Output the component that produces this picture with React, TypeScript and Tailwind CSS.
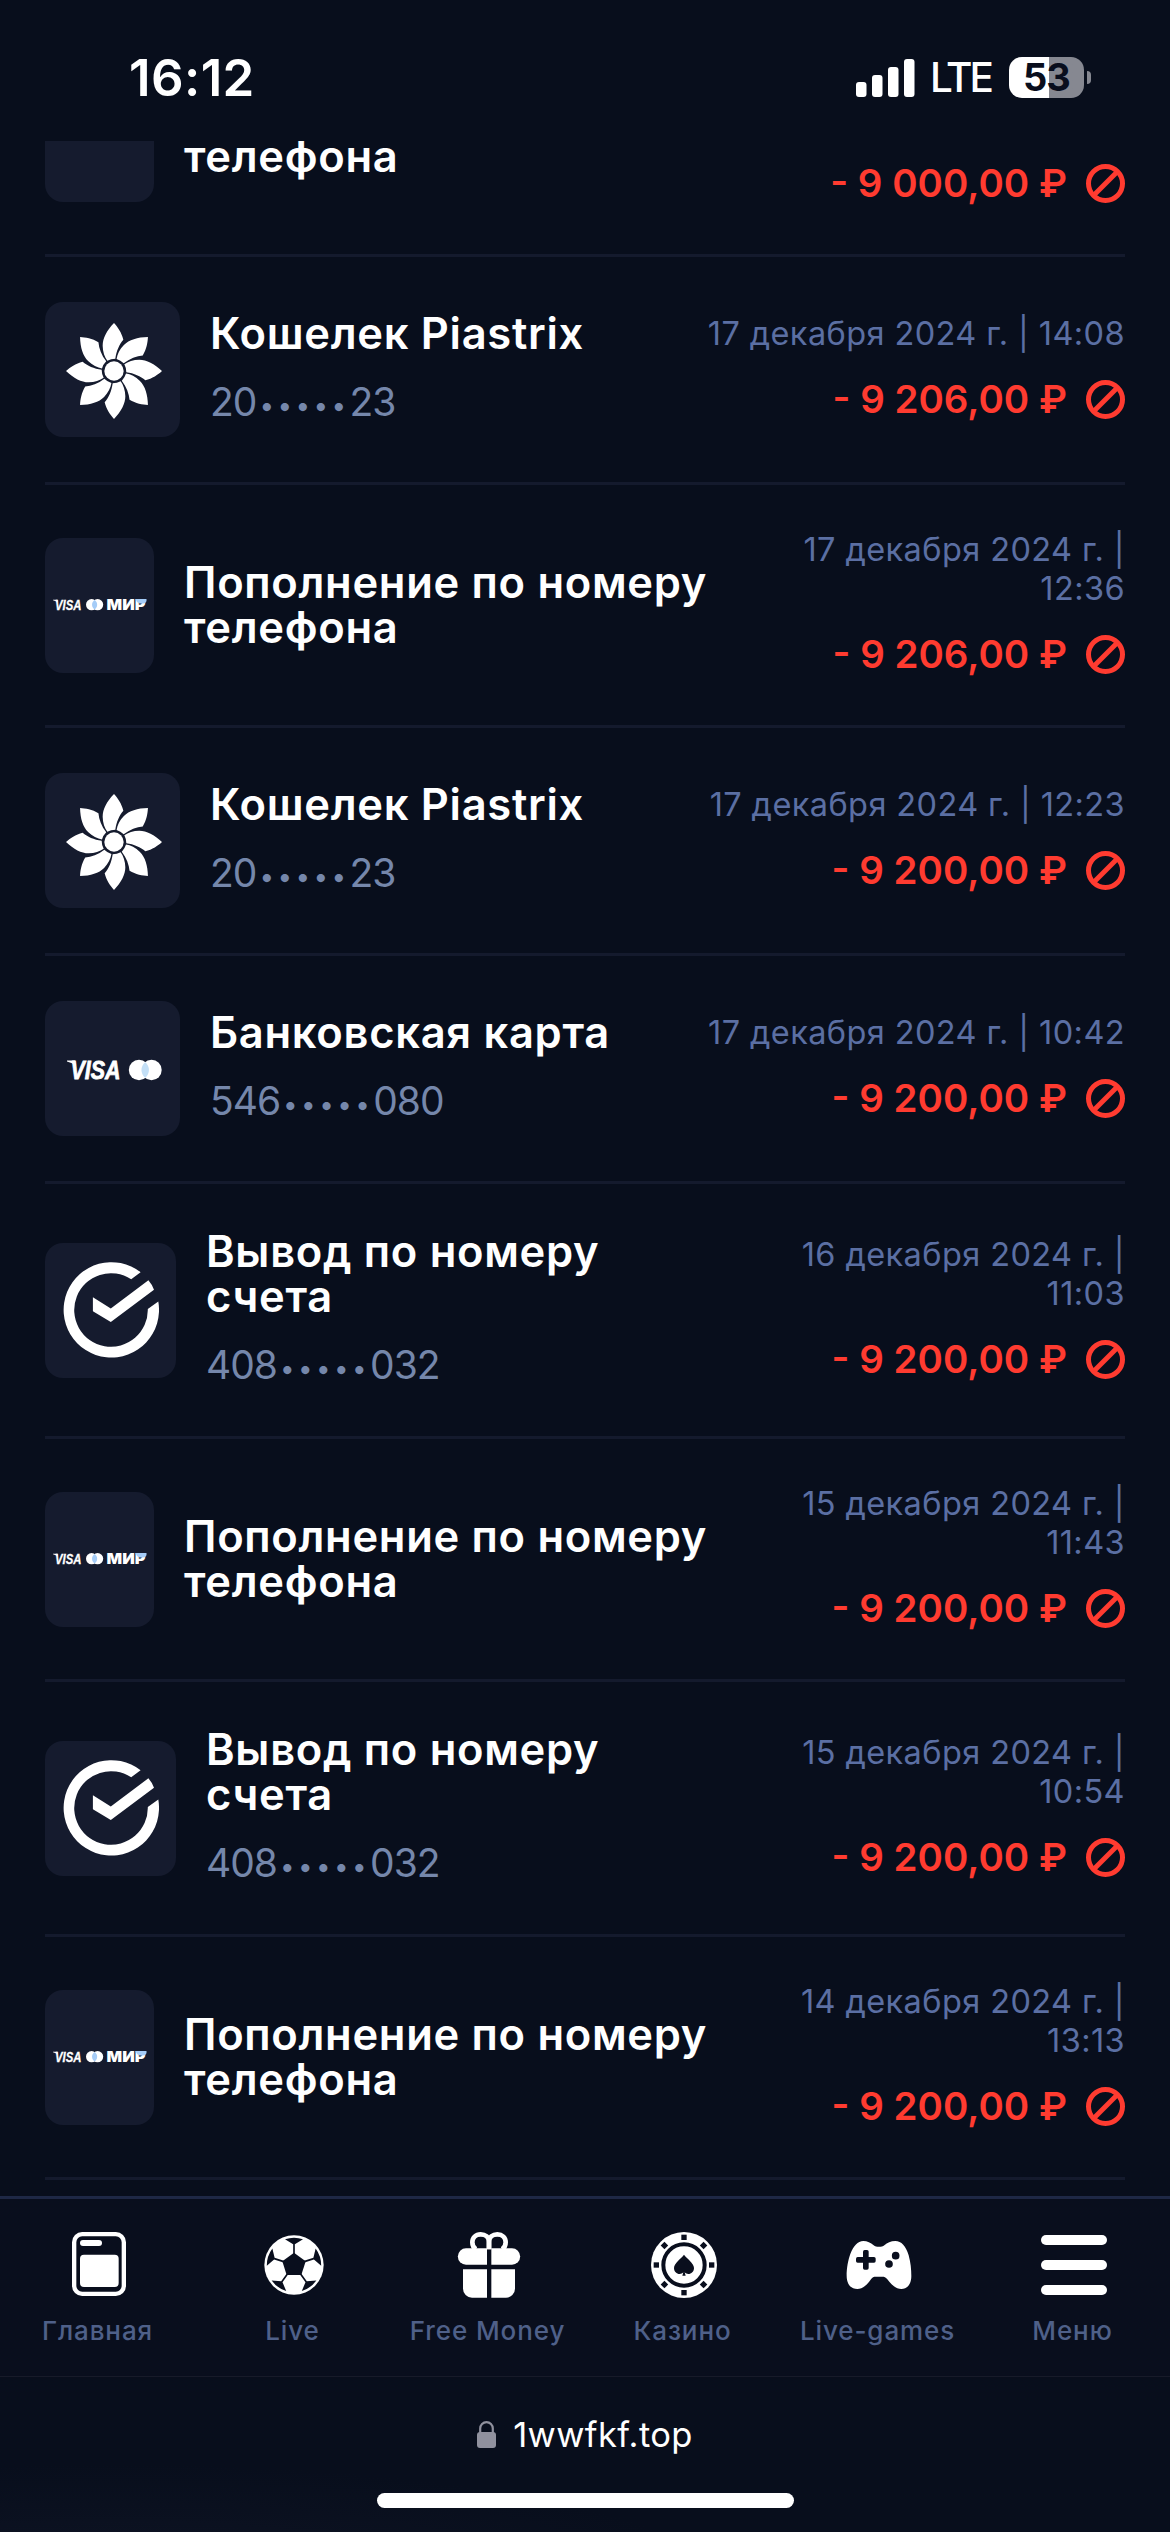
import React from 'react';

type Method = 'phone' | 'piastrix' | 'card' | 'account';

interface Transaction {
  id: number;
  method: Method;
  date: string;
  amount: string;
  account?: [string, string];
}

const titles: Record<Method, string> = {
  phone: 'Пополнение по номеру\nтелефона',
  piastrix: 'Кошелек Piastrix',
  card: 'Банковская карта',
  account: 'Вывод по номеру\nсчета',
};

const transactions: Transaction[] = [
  { id: 2, method: 'piastrix', date: '17 декабря 2024 г. | 14:08', amount: '- 9 206,00 ₽', account: ['20', '23'] },
  { id: 3, method: 'phone', date: '17 декабря 2024 г. |\n12:36', amount: '- 9 206,00 ₽' },
  { id: 4, method: 'piastrix', date: '17 декабря 2024 г. | 12:23', amount: '- 9 200,00 ₽', account: ['20', '23'] },
  { id: 5, method: 'card', date: '17 декабря 2024 г. | 10:42', amount: '- 9 200,00 ₽', account: ['546', '080'] },
  { id: 6, method: 'account', date: '16 декабря 2024 г. |\n11:03', amount: '- 9 200,00 ₽', account: ['408', '032'] },
  { id: 7, method: 'phone', date: '15 декабря 2024 г. |\n11:43', amount: '- 9 200,00 ₽' },
  { id: 8, method: 'account', date: '15 декабря 2024 г. |\n10:54', amount: '- 9 200,00 ₽', account: ['408', '032'] },
  { id: 9, method: 'phone', date: '14 декабря 2024 г. |\n13:13', amount: '- 9 200,00 ₽' },
];

const PiastrixLogo = () => (
  <svg viewBox="-144 -144 288 288" className="w-24 h-24 mt-[3px] ml-[3px]" fill="#fff">
    {[0, 45, 90, 135, 180, 225, 270, 315].map((angle) => (
      <path
        key={angle}
        transform={`rotate(${angle})`}
        d="M0-144C-22-121-34-98-34-76C-34-58-28-42-20-31Q-9-37 4-37C7-60 16-80 28-94C23-115 11-132 0-144Z"
      />
    ))}
    <circle r="29" />
  </svg>
);

const CheckLogo = () => (
  <svg viewBox="0 0 96 96" className="w-24 h-24" fill="#fff">
    <path d="M77.6 10.2A47.7 47.7 0 1 0 95.3 39.6L84.8 47A36.8 36.8 0 1 1 68.2 17.2Z" />
    <path d="M29.9 35.2V49.2L47.8 60L91 27.7Q89.4 22.8 85.4 18.2L47.8 46.4Z" />
  </svg>
);

const CardLogo = () => (
  <svg viewBox="0 0 96 22" className="w-24 h-[22px] mt-[2px] overflow-visible" fill="#fff">
    <path d="M0 1.6H8L9 7Q5.5 3.4 0 2.4Z" />
    <text x="3.5" y="20.2" fontSize="26" fontWeight="700" fontStyle="italic" fontFamily="'Liberation Sans'" stroke="#fff" strokeWidth=".8" textLength="50" lengthAdjust="spacingAndGlyphs">VISA</text>
    <circle cx="72" cy="11" r="10.2" />
    <circle cx="84.5" cy="11" r="10.2" />
    <path fill="#c3dff6" d="M78.2 3.2a10 10 0 0 1 0 15.6a10 10 0 0 1 0-15.6Z" />
  </svg>
);

const PhoneLogo = () => (
  <svg viewBox="0 0 94 14" className="w-[94px] h-3.5 overflow-visible" fill="#fff">
    <path d="M0 1.8H4.5L5 4.8Q3 2.8 0 2.3Z" />
    <text x="2" y="11.8" fontSize="14" fontWeight="700" fontStyle="italic" fontFamily="'Liberation Sans'" stroke="#fff" strokeWidth=".3" textLength="26.5" lengthAdjust="spacingAndGlyphs">VISA</text>
    <circle cx="38.6" cy="6.7" r="5.6" />
    <circle cx="44.6" cy="6.7" r="5.6" />
    <path fill="#a5ccf7" d="M41.6 2a5.6 5.6 0 0 1 0 9.4a5.6 5.6 0 0 1 0-9.4Z" />
    <text x="53.6" y="11.8" fontSize="15" fontWeight="900" fontFamily="Inter" textLength="39" lengthAdjust="spacingAndGlyphs">МИР</text>
    <path fill="#a5ccf7" d="M82.5 .9H93.5Q94 5.2 90 5.6H86.5Q83.5 4.5 82.5 .9Z" />
  </svg>
);

const methodIcons: Record<Method, { logo: React.ReactNode; box: string }> = {
  phone: { logo: <PhoneLogo />, box: 'w-[109px]' },
  piastrix: { logo: <PiastrixLogo />, box: 'w-[135px]' },
  card: { logo: <CardLogo />, box: 'w-[135px] pl-[5px]' },
  account: { logo: <CheckLogo />, box: 'w-[131px]' },
};

const DeclinedIcon = () => (
  <svg viewBox="0 0 39 39" className="w-[39px] h-[39px]" fill="none" stroke="#ff3b30" strokeWidth="5">
    <circle cx="19.5" cy="19.5" r="17" />
    <path d="M31.5 7.5L7.5 31.5" />
  </svg>
);

const Amount = ({ value }: { value: string }) => (
  <div className="flex items-center gap-[19px] h-[51px]">
    <span className="text-[38.5px] font-semibold text-[#ff3b30] whitespace-pre">{value}</span>
    <DeclinedIcon />
  </div>
);

const TransactionRow = ({ item }: { item: Transaction }) => {
  const { logo, box } = methodIcons[item.method];
  return (
    <li className="flex items-center py-[45px] border-b-3 border-[#141a2d]">
      <div className={`flex items-center justify-center shrink-0 h-[135px] rounded-[18px] bg-[#151b2e] ${box}`}>
        {logo}
      </div>
      <div className="flex flex-col gap-[21px] ml-[30px]">
        <h3 className="text-[43.5px] leading-[45px] font-semibold tracking-[0.7px] text-white whitespace-pre">{titles[item.method]}</h3>
        {item.account && (
          <p className="flex h-[51px] items-center text-[39px] tracking-[-1px] text-[#7587ab]">
            {item.account[0]}
            <span className="pl-[3px] mt-1.5 text-[26px] tracking-[3.4px]">•••••</span>
            {item.account[1]}
          </p>
        )}
      </div>
      <div className="flex flex-col items-end gap-[21px] ml-auto">
        <time className="text-[32.5px] leading-[39px] tracking-[0.4px] text-right text-[#5b6fa3] whitespace-pre">{item.date}</time>
        <Amount value={item.amount} />
      </div>
    </li>
  );
};

// Lower part of the row that has scrolled under the status bar
const ScrolledRow = () => (
  <div className="flex items-start h-[116px] border-b-3 border-[#141a2d]">
    <div className="w-[109px] h-[61px] rounded-b-[18px] bg-[#151b2e]" />
    <h3 className="-mt-[7px] ml-[30px] text-[43.5px] leading-[45px] font-semibold tracking-[0.7px] text-white">телефона</h3>
    <div className="ml-auto mt-[17px]">
      <Amount value="- 9 000,00 ₽" />
    </div>
  </div>
);

const StatusBar = () => (
  <header className="flex shrink-0 items-start h-[141px] pl-[129px] pr-[79px] pt-[48px]">
    <span className="text-[51px] leading-[60px] font-semibold tracking-[0.4px] text-white">16:12</span>
    <div className="flex items-center ml-auto mt-[7px] h-[45px]">
      <svg viewBox="0 0 59 38" className="w-[59px] h-[38px]" fill="#fff">
        <rect x="0" y="23" width="10.5" height="15" rx="3" />
        <rect x="16" y="16" width="10.5" height="22" rx="3" />
        <rect x="32" y="8" width="10.5" height="30" rx="3" />
        <rect x="48" y="0" width="10.5" height="38" rx="3" />
      </svg>
      <span className="ml-[15px] w-[79px] text-[40.5px] leading-[45px] tracking-[-3px] text-white font-medium">LTE</span>
      <div className="flex items-center justify-center w-[75px] h-[41px] rounded-[13px] bg-linear-to-r from-white from-54% to-[#868891] to-54% text-[38px] font-bold tracking-[-1px] text-[#090e1d]">
        53
      </div>
      <div className="ml-[3px] w-1 h-[13px] rounded-r-full bg-[#868891]" />
    </div>
  </header>
);

const HomeIcon = () => (
  <svg viewBox="0 0 198 198" className="w-[66px] h-[66px]" fill="#fff">
    <rect x="24.5" y="6.5" width="149" height="179" rx="24" fill="none" stroke="#fff" strokeWidth="13" />
    <rect x="42" y="24" width="66" height="18" rx="9" />
    <rect x="42" y="68" width="116" height="97" rx="12" />
  </svg>
);

const BallIcon = () => (
  <svg viewBox="-99 -99 198 198" className="w-[66px] h-[66px]">
    <circle r="89" fill="#fff" />
    <g fill="#090e1d">
      {[0, 72, 144, 216, 288].map((angle) => (
        <g key={angle} transform={`rotate(${angle})`}>
          <path d="M-27-77Q0-86 27-77L2.5-62V-30H-2.5V-62Z" />
        </g>
      ))}
      <path d="M0-37L35-11L22 30H-22L-35-11Z" />
    </g>
  </svg>
);

const GiftIcon = () => (
  <svg viewBox="0 0 198 198" className="w-[66px] h-[66px]" fill="#fff">
    <g fill="none" stroke="#fff" strokeWidth="14">
      <path d="M99 52V30C99 15 88 7 74 7C59 7 49 17 49 31C49 40 53 48 60 52" />
      <path d="M99 52V30C99 15 110 7 124 7C139 7 149 17 149 31C149 40 145 48 138 52" />
    </g>
    <path d="M93 49H30A24 24 0 0 0 30 98H93Z" />
    <path d="M106 49H168A24 24 0 0 1 168 98H106Z" />
    <path d="M93 112H21V170A27 27 0 0 0 48 197H93Z" />
    <path d="M106 112H177V170A27 27 0 0 1 150 197H106Z" />
  </svg>
);

const ChipIcon = () => (
  <svg viewBox="-99 -99 198 198" className="w-[66px] h-[66px]">
    <circle r="99" fill="#fff" />
    <circle r="62" fill="none" stroke="#090e1d" strokeWidth="12" />
    <g fill="#090e1d">
      {[0, 45, 90, 135, 180, 225, 270, 315].map((angle) => (
        <rect key={angle} x="-8" y="-91" width="16" height="16" transform={`rotate(${angle})`} />
      ))}
      <path d="M0-31C-8-20-30-6-30 9C-30 20-22 27-13 27C-9 27-5 25-2 22L-5 32H5L2 22C5 25 9 27 13 27C22 27 30 20 30 9C30-6 8-20 0-31Z" />
    </g>
  </svg>
);

const GamepadIcon = () => (
  <svg viewBox="0 0 198 198" className="w-[66px] h-[66px]">
    <path
      fill="#fff"
      d="M52 27C64 27 74 32 83 40C90 46 108 46 115 40C124 32 134 27 148 27C166 27 180 42 188 70C194 92 196 112 196 132C196 156 184 171 166 171C150 171 136 158 124 142C118 135 116 134 108 134H90C82 134 80 135 75 142C64 158 50 171 34 171C14 171 2 155 2 132C2 88 18 27 52 27Z"
    />
    <g fill="#090e1d">
      <rect x="30" y="75" width="59" height="17" rx="5" />
      <rect x="51" y="54" width="17" height="59" rx="5" />
      <circle cx="149" cy="71" r="11.5" />
      <circle cx="129" cy="96" r="11.5" />
    </g>
  </svg>
);

const MenuIcon = () => (
  <svg viewBox="0 0 198 198" className="w-[66px] h-[66px]" fill="#fff">
    <rect y="9" width="198" height="30" rx="15" />
    <rect y="84" width="198" height="30" rx="15" />
    <rect y="159" width="198" height="30" rx="15" />
  </svg>
);

const navItems = [
  { label: 'Главная', icon: <HomeIcon /> },
  { label: 'Live', icon: <BallIcon /> },
  { label: 'Free Money', icon: <GiftIcon /> },
  { label: 'Казино', icon: <ChipIcon /> },
  { label: 'Live-games', icon: <GamepadIcon /> },
  { label: 'Меню', icon: <MenuIcon /> },
];

const App: React.FC = () => {
  return (
    <div className="flex flex-col w-[1170px] h-[2532px] overflow-hidden bg-[#080e1c] font-['Inter','Liberation_Sans',sans-serif]">
      <StatusBar />

      <main className="h-[2055px] shrink-0 overflow-hidden px-[45px]">
        <ScrolledRow />
        <ul>
          {transactions.map((item) => (
            <TransactionRow key={item.id} item={item} />
          ))}
        </ul>
      </main>

      {/* Bottom navigation */}
      <nav className="grid grid-cols-6 shrink-0 h-[180px] border-t-3 border-[#1e2845] bg-[#090e1d] pt-[33px]">
        {navItems.map(({ label, icon }) => (
          <button key={label} className="flex flex-col items-center">
            <span className="ml-[3px]">{icon}</span>
            <span className="mt-[18px] text-[26px] leading-[30px] font-medium tracking-[0.9px] whitespace-nowrap text-[#4f6089]">{label}</span>
          </button>
        ))}
      </nav>

      {/* Browser address bar */}
      <footer className="flex flex-col items-center grow border-t border-[#171a29] bg-radial-[at_10%_130%] from-[#0e1424] to-[#080e1c] to-40%">
        <div className="flex items-center gap-[17px] mt-[35px] h-[45px]">
          <svg viewBox="0 0 19 27" className="w-[19px] h-[27px]" fill="#90919e">
            <rect y="11" width="19" height="16" rx="3" />
            <path d="M3.2 12V7.5a6.3 6.3 0 0 1 12.6 0V12" fill="none" stroke="#90919e" strokeWidth="2.2" />
          </svg>
          <span className="text-[34.5px] tracking-[0.4px] text-white">1wwfkf.top</span>
        </div>
        <div className="mt-[36px] w-[417px] h-[15px] rounded-full bg-white" />
      </footer>
    </div>
  );
};

export default App;
